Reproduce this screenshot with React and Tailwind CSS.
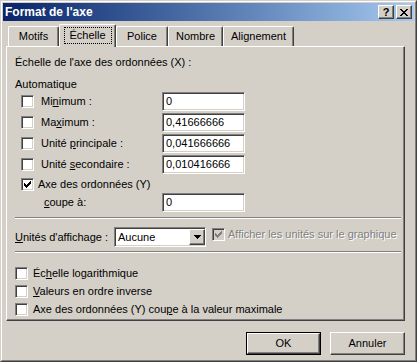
import React from 'react';

const CHECK = ['......#', '.....##', '#...###', '##.###.', '#####..', '.###...', '..#....'];
const ARROW = ['#######', '.#####.', '..###..', '...#...'];
const CROSS = ['##....##', '.##..##.', '..####..', '...##...', '..####..', '.##..##.', '##....##'];

// tiny pixel glyph, for the classic check / arrow / close marks
const Pixels = ({ rows, color = '#000' }) => (
    <svg width={rows[0].length} height={rows.length} shapeRendering="crispEdges" className="block">
        {rows.flatMap((r, y) =>
            [...r].map((c, x) =>
                c === '#' ? <rect key={`${x}-${y}`} x={x} y={y} width="1" height="1" fill={color} /> : null
            )
        )}
    </svg>
);

const sunken = 'border border-t-[#808080] border-l-[#808080] border-r-white border-b-white shadow-[inset_1px_1px_0_#404040,inset_-1px_-1px_0_#d4d0c8]';
const raised = 'border border-t-white border-l-white border-r-[#404040] border-b-[#404040] shadow-[inset_-1px_-1px_0_#808080]';

const Box = ({ checked, disabled }) => (
    <span className={`w-[13px] h-[13px] shrink-0 flex items-center justify-center ${sunken} ${disabled ? 'bg-[#d4d0c8]' : 'bg-white'}`}>
        {checked && <Pixels rows={CHECK} color={disabled ? '#808080' : '#000'} />}
    </span>
);

const Field = ({ value }) => (
    <div className={`w-[83px] h-[19px] bg-white flex items-center pl-[3px] ${sunken}`}>{value}</div>
);

const Row = ({ label, value }) => (
    <div className="h-[21px] flex items-center">
        <div className="w-[147px] flex items-center pl-[6px]">
            <Box />
            <span className="ml-[7px]">{label}</span>
        </div>
        <Field value={value} />
    </div>
);

const Tab = ({ label, width, active }) =>
    active ? (
        <div className={`${width} h-[23px] -mb-px relative z-10 bg-[#d4d0c8] rounded-t-[2px] border-l border-t border-r border-l-white border-t-white border-r-[#404040] shadow-[inset_-1px_0_0_#808080] flex items-start justify-center pt-[2px]`}>
            <span className="w-[48px] h-[17px] border border-dotted border-black flex items-center justify-center">{label}</span>
        </div>
    ) : (
        <div className={`${width} h-[20px] rounded-t-[2px] border-l border-t border-r border-l-white border-t-white border-r-[#404040] shadow-[inset_-1px_0_0_#808080] flex items-center justify-center`}>
            {label}
        </div>
    );

const BottomCheck = ({ children }) => (
    <div className="h-[18px] flex items-center">
        <Box />
        <span className="ml-[5px]">{children}</span>
    </div>
);

export default function App() {
    return (
        <div className="w-[417px] h-[362px] bg-[#d4d0c8] border border-t-[#d4d0c8] border-l-[#d4d0c8] border-r-[#404040] border-b-[#404040] font-['Liberation_Sans',Arial,sans-serif] text-[11px] leading-[13px] text-black">
            <div className="h-full border border-t-white border-l-white border-r-[#808080] border-b-[#808080] p-px flex flex-col">

                {/* Title bar */}
                <div className="h-[18px] shrink-0 flex items-center pl-[2px] pr-[2px] bg-linear-to-r from-[#0a246a] to-[#a6caf0]">
                    <span className="flex-1 text-white font-bold text-[12px]">Format de l'axe</span>
                    <div className={`w-[16px] h-[14px] bg-[#d4d0c8] flex items-center justify-center font-bold text-[11px] leading-none ${raised}`}>?</div>
                    <div className={`ml-[2px] w-[16px] h-[14px] bg-[#d4d0c8] flex items-center justify-center ${raised}`}>
                        <Pixels rows={CROSS} />
                    </div>
                </div>

                {/* Tabs */}
                <div className="mt-[3px] h-[22px] ml-[5px] flex items-end">
                    <Tab label="Motifs" width="w-[51px]" />
                    <Tab label="Échelle" width="w-[57px]" active />
                    <Tab label="Police" width="w-[52px]" />
                    <Tab label="Nombre" width="w-[55px]" />
                    <Tab label="Alignement" width="w-[71px]" />
                </div>

                {/* Panel */}
                <div className="ml-[3px] w-[399px] h-[275px] border border-t-white border-l-white border-r-[#404040] border-b-[#404040] shadow-[inset_-1px_-1px_0_#808080] pl-[8px] pt-[9px] flex flex-col">
                    <div className="h-[13px]">Échelle de l'axe des ordonnées (X) :</div>
                    <div className="h-[13px] mt-[9px]">Automatique</div>

                    <Row label={<>Mi<u>n</u>imum :</>} value="0" />
                    <Row label={<>Ma<u>x</u>imum :</>} value="0,41666666" />
                    <Row label={<>Unité <u>p</u>rincipale :</>} value="0,041666666" />
                    <Row label={<>Unité <u>s</u>econdaire :</>} value="0,010416666" />

                    <div className="h-[18px] flex items-center pl-[6px]">
                        <Box checked />
                        <span className="ml-[4px]">Axe des ordonnées (Y)</span>
                    </div>
                    <div className="h-[19px] flex items-center">
                        <div className="w-[147px] pl-[29px]"><u>c</u>oupe à:</div>
                        <Field value="0" />
                    </div>

                    <div className="mt-[5px] w-[386px] h-[2px] border-t border-b border-t-[#808080] border-b-white" />

                    <div className="mt-[8px] h-[20px] flex items-center">
                        <div className="w-[99px]"><u>U</u>nités d'affichage :</div>
                        <div className={`w-[92px] h-[20px] bg-white flex items-center pl-[3px] ${sunken}`}>
                            <span className="flex-1">Aucune</span>
                            <div className={`w-[16px] h-[16px] bg-[#d4d0c8] flex items-center justify-center ${raised}`}>
                                <Pixels rows={ARROW} />
                            </div>
                        </div>
                        <div className="ml-[6px] self-start mt-[1px] flex items-center h-[13px]">
                            <Box checked disabled />
                            <span className="ml-[3px] text-[#808080] [text-shadow:1px_1px_0_#fff]">Afficher les unités sur le graphique</span>
                        </div>
                    </div>

                    <div className="mt-[4px] w-[386px] h-[2px] border-t border-b border-t-[#808080] border-b-white" />

                    <div className="mt-[11px] flex flex-col">
                        <BottomCheck>Éc<u>h</u>elle logarithmique</BottomCheck>
                        <BottomCheck><u>V</u>aleurs en ordre inverse</BottomCheck>
                        <BottomCheck>Axe des ordonnées (Y) cou<u>p</u>e à la valeur maximale</BottomCheck>
                    </div>
                </div>

                {/* Buttons */}
                <div className="ml-[3px] w-[399px] mt-[11px] flex justify-end gap-[9px]">
                    <div className="w-[75px] h-[23px] border border-black">
                        <div className={`h-full flex items-center justify-center ${raised}`}>OK</div>
                    </div>
                    <div className={`w-[75px] h-[23px] flex items-center justify-center ${raised}`}>Annuler</div>
                </div>
            </div>
        </div>
    );
}
